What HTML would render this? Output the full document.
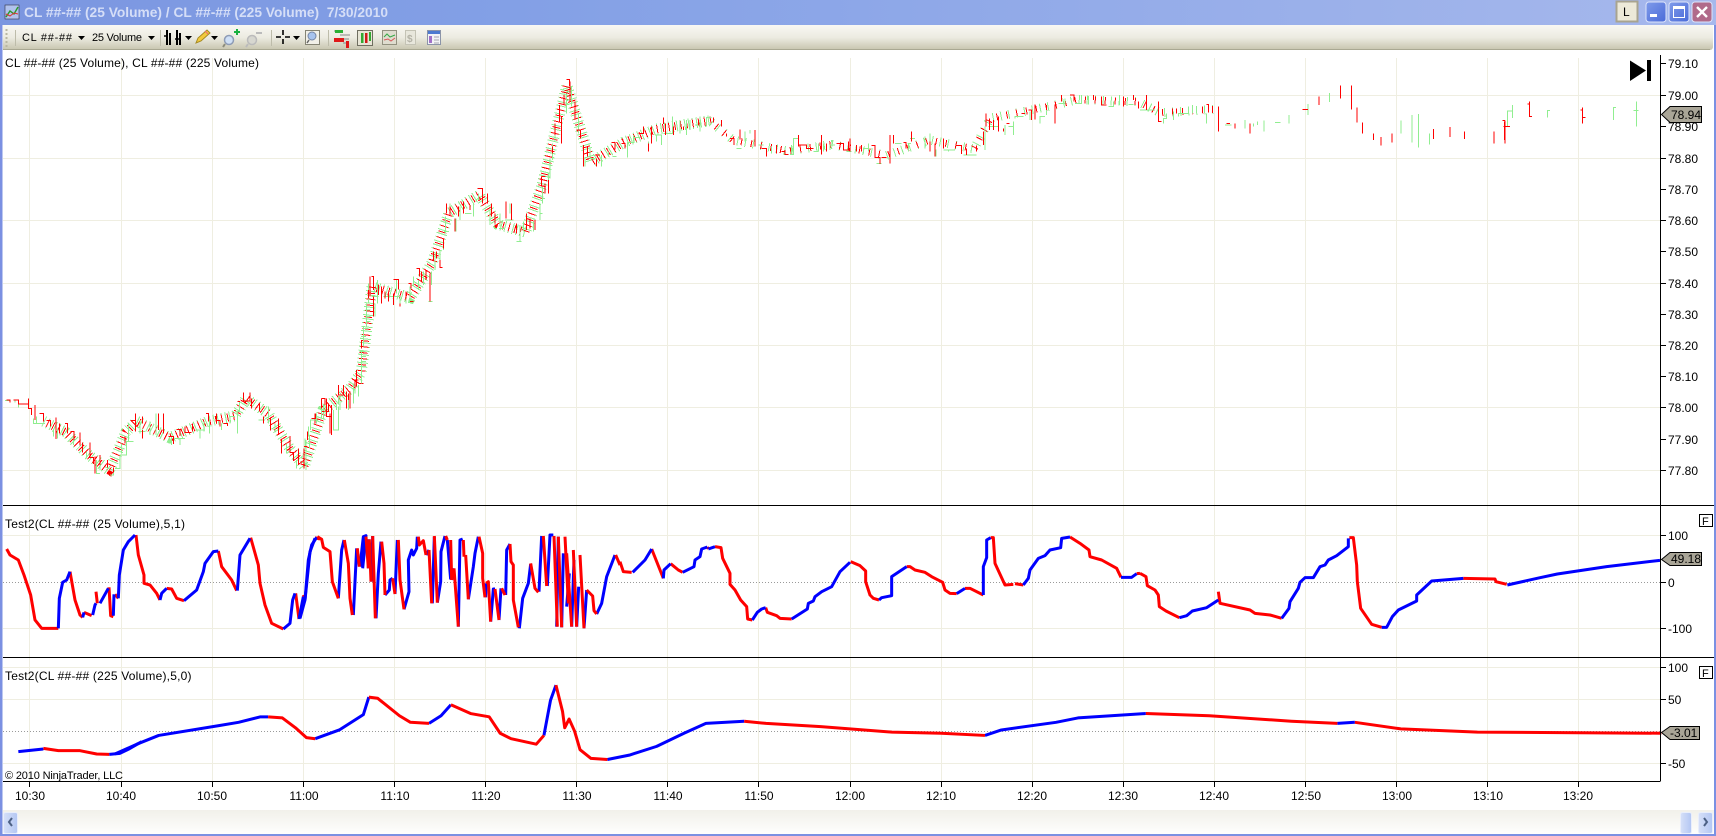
<!DOCTYPE html>
<html><head><meta charset="utf-8"><title>CL chart</title>
<style>
html,body{margin:0;padding:0;background:#fff;width:1716px;height:836px;overflow:hidden}
svg{display:block;font-family:"Liberation Sans",sans-serif}
.r,.b,.gb,.rb,.hg,.hr{fill:none;vector-effect:non-scaling-stroke}
.r{stroke:#f00;stroke-width:3px;stroke-linejoin:round}
.b{stroke:#00f;stroke-width:3px;stroke-linejoin:round}
.rb{stroke:#f00;stroke-width:1px;shape-rendering:crispEdges}
.gb{stroke:#90ee90;stroke-width:1px;shape-rendering:crispEdges}
.hg{stroke:#90ee90;shape-rendering:crispEdges}
.hr{stroke:#f00;shape-rendering:crispEdges}
.g{stroke:#efeee1;stroke-width:1;shape-rendering:crispEdges}
.k{stroke:#000;stroke-width:1;shape-rendering:crispEdges}
text{font-size:12px;fill:#000}
</style></head><body>
<svg width="1716" height="836" viewBox="0 0 1716 836" xmlns="http://www.w3.org/2000/svg">
<defs>
<linearGradient id="tb" x1="0" x2="1" y1="0" y2="0"><stop offset="0" stop-color="#7b96e0"/><stop offset=".3" stop-color="#83a0e6"/><stop offset="1" stop-color="#a6b8ec"/></linearGradient>
<linearGradient id="tool" x1="0" x2="0" y1="0" y2="1"><stop offset="0" stop-color="#f9f8f3"/><stop offset=".5" stop-color="#ecebe1"/><stop offset="1" stop-color="#c6c4ae"/></linearGradient>
<linearGradient id="sb" x1="0" x2="0" y1="0" y2="1"><stop offset="0" stop-color="#f1f0ea"/><stop offset="1" stop-color="#fefefd"/></linearGradient>
<linearGradient id="btn" x1="0" x2="1" y1="0" y2="1"><stop offset="0" stop-color="#7f9bea"/><stop offset="1" stop-color="#4a6ad8"/></linearGradient>
<linearGradient id="sc" x1="0" x2="1" y1="0" y2="0"><stop offset="0" stop-color="#d6e0f8"/><stop offset="1" stop-color="#b3c6f3"/></linearGradient>
</defs>
<rect width="1716" height="836" fill="#fff"/>
<!-- title bar -->
<rect width="1716" height="25" fill="url(#tb)"/>
<rect x="5" y="5" width="14" height="14" fill="#dfe8f8" fill-opacity=".55" stroke="#334" stroke-width=".6"/>
<path d="M6 17l4-6 4 3 4-7" fill="none" stroke="#2a9a2a" stroke-width="1.4"/><path d="M6 14l4 2 4-3 4 1" fill="none" stroke="#d33" stroke-width="1"/>
<text x="24" y="17" textLength="364" lengthAdjust="spacingAndGlyphs" xml:space="preserve" style="font-size:14px;font-weight:bold;fill:#d5def7">CL ##-## (25 Volume) / CL ##-## (225 Volume)  7/30/2010</text>
<rect x="1616.5" y="1.5" width="21" height="20" fill="#ece9d8" stroke="#a8a490" stroke-width="2"/>
<text x="1623" y="16" style="font-size:12px">L</text>
<rect x="1646" y="2" width="20" height="20" rx="3" fill="url(#btn)" stroke="#dde4fa"/>
<rect x="1650" y="14" width="7" height="3" fill="#fff"/>
<rect x="1669" y="2" width="20" height="20" rx="3" fill="url(#btn)" stroke="#dde4fa"/>
<rect x="1673.5" y="7.5" width="11" height="10" fill="none" stroke="#fff"/><rect x="1673" y="6" width="12" height="3" fill="#fff"/>
<rect x="1692" y="2" width="20" height="20" rx="3" fill="#b06a8a" stroke="#dde4fa"/>
<path d="M1697 7l10 10M1707 7l-10 10" stroke="#fff" stroke-width="2.4"/>
<!-- borders -->
<rect x="0" y="25" width="2.5" height="811" fill="#7b90e2"/>
<rect x="1714" y="25" width="2" height="811" fill="#7b90e2"/>
<rect x="0" y="834" width="1716" height="2" fill="#7b90e2"/>
<!-- toolbar -->
<path d="M3 25H1713V47a3 3 0 0 1-3 3H3z" fill="url(#tool)"/>
<path d="M3 49.5H1710" stroke="#a9a892" shape-rendering="crispEdges"/>
<path d="M6.5 29v18" stroke="#b9b7a2" stroke-dasharray="2 2" stroke-width="2"/>
<path d="M15.5 30v16M160.5 30v16M271.5 30v16M328.5 30v16" stroke="#bdbcaa" shape-rendering="crispEdges"/>
<text x="22" y="41" textLength="50" style="font-size:11px">CL ##-##</text>
<path d="M78 36h7l-3.500 4z" /><text x="92" y="41" textLength="50" style="font-size:11px">25 Volume</text>
<path d="M148 36h7l-3.500 4z"/>
<path d="M167 30v15M170 33v12M177 30v15M180 33v12" stroke="#000" stroke-width="2"/><path d="M164 36h4M175 39h5" stroke="#000" stroke-width="1.500"/>
<path d="M185 36h7l-3.500 4z"/>
<path d="M196 43l2-5 9-8 3 3-9 8z" fill="#f2c93c" stroke="#a58a22"/><path d="M205 31l3 3" stroke="#e67"/>
<path d="M211 36h7l-3.500 4z"/>
<circle cx="229" cy="40" r="4.500" fill="#cfe0f6" stroke="#8e9cb6" stroke-width="1.500"/><path d="M225 44l-2 3" stroke="#8c8c7c" stroke-width="2"/><path d="M234 32h6M237 29v6" stroke="#19b040" stroke-width="2"/>
<circle cx="252" cy="40" r="4.500" fill="#d7d7d0" stroke="#bbb" stroke-width="1.500"/><path d="M248 44l-2 3" stroke="#bbb" stroke-width="2"/><path d="M256 33h6" stroke="#bbb" stroke-width="2"/>
<path d="M276 37h5M285 37h5M283 30v5M283 39v5" stroke="#000" stroke-width="1.600"/>
<path d="M293 36h7l-3.500 4z"/>
<rect x="305.500" y="30.500" width="14" height="14" fill="#f1f0e8" stroke="#858474"/><circle cx="312" cy="36" r="4" fill="#a7c3ee" stroke="#7585a4"/><path d="M309 40l-2 3" stroke="#666" stroke-width="1.500"/>
<path d="M334 31h8M340 35h10M343 39h6M343 43h6" stroke="#888" /><rect x="335" y="30" width="8" height="3" fill="#2cb035"/><rect x="334" y="38" width="10" height="4" fill="#e01818"/><rect x="346" y="41" width="3" height="7" fill="#e01818"/>
<rect x="357.500" y="30.500" width="15" height="15" fill="#e7e5d6" stroke="#6f6e60"/><rect x="361" y="33" width="2.500" height="10" fill="#32a832"/><rect x="365" y="33" width="2.500" height="10" fill="#d01818"/><rect x="369" y="32" width="2" height="9" fill="#32a832"/>
<rect x="382.500" y="30.500" width="14" height="14" fill="#dfddcf" stroke="#92917f"/><path d="M384 37l3-3 3 3 5-2" fill="none" stroke="#35a845"/><path d="M384 40l4-1 3 2 4-3" fill="none" stroke="#d85858"/>
<rect x="405.500" y="30.500" width="10" height="14" fill="#e8e7dc" stroke="#c4c3b5"/><text x="407" y="42" style="font-size:10px;font-weight:bold;fill:#b3b2a6">$</text>
<rect x="427.500" y="30.500" width="13" height="14" fill="#f2f3f6" stroke="#8b94a8"/><rect x="428" y="31" width="12" height="3" fill="#4d7ad0"/><rect x="429" y="36" width="3" height="7" fill="#a070c8"/><path d="M434 37h5M434 40h5M434 43h5" stroke="#a5a5b0"/>
<!-- grid -->
<path class="g" d="M29.500 58V781M121.500 58V781M212.500 58V781M303.500 58V781M394.500 58V781M485.500 58V781M576.500 58V781M667.500 58V781M758.500 58V781M850.500 58V781M941.500 58V781M1032.500 58V781M1123.500 58V781M1214.500 58V781M1305.500 58V781M1396.500 58V781M1487.500 58V781M1578.500 58V781"/>
<path class="g" d="M3 95.500H1660M3 158.500H1660M3 220.500H1660M3 283.500H1660M3 345.500H1660M3 407.500H1660M3 470.500H1660M3 535.500H1660M3 628.500H1660M3 667.500H1660M3 699.500H1660M3 763.500H1660"/>
<path d="M3 582.500H1660M3 731.500H1660" stroke="#9a9a9a" stroke-dasharray="1 2" shape-rendering="crispEdges"/>
<!-- price hatch -->
<g transform="scale(1.0944)">
<path class="hg" style="stroke-width:11px;stroke-dasharray:1 3" d="M40 385L60 395 80 415 100 430 115 395 125 385 155 400 190 385 215 380 225 364 245 378 265 410 278 426 295 375 320 355 330 340 340 262 375 272 395 240 410 195 438 178 455 205 480 212 495 170 505 130 518 78 528 110 540 148 570 130 600 118 650 110"/>
<path class="hr" style="stroke-width:8px;stroke-dasharray:1 5;stroke-dashoffset:2" d="M40 385L60 395 80 415 100 430 115 395 125 385 155 400 190 385 215 380 225 364 245 378 265 410 278 426 295 375 320 355 330 340 340 262 375 272 395 240 410 195 438 178 455 205 480 212 495 170 505 130 518 78 528 110 540 148 570 130 600 118 650 110"/>
<path class="hg" style="stroke-width:9px;stroke-dasharray:1 7" d="M650 112L670 128 720 138 760 132 810 142 850 128 890 136 905 108 960 97 985 91 1040 93 1060 103 1110 100"/>
<path class="hr" style="stroke-width:7px;stroke-dasharray:1 9;stroke-dashoffset:4" d="M650 112L670 128 720 138 760 132 810 142 850 128 890 136 905 108 960 97 985 91 1040 93 1060 103 1110 100"/>
</g>
<!-- price bars -->
<g transform="translate(0 380) scale(.33333)">
<path class="gb" d="M15 62h15M45 58v10M55 72v10M100 115v15h35M110 110v20M160 150v20M172 145v30M220 170v25M260 215v20M290 240v40h10M300 225v45M330 285h10v-20M345 265h15v-40h20v-40M365 190v30M385 130v55h15M420 120v40M415 155h20M450 125v40M468 100v65M515 170v25M540 175v20M525 175h30M590 150h25M600 150v25M612 125v30M628 110v50M665 130v20M690 130v-20h15M712 95v65M718 65v30h-12M775 120h20M805 80v50M825 130v28M860 190v30M890 240v25M918 180v90M928 165v40M932 120v30M950 100v30M970 75v40M1000 90v60h15v-50M1020 50v40M1060 10v60"/>
<path class="rb" d="M20 60h10v8M40 60h15v12h30M85 55v30h10v20M105 75v45M118 100h12v25M140 122h12v18M168 112v65M178 130v30M195 130h8v30M212 155h10v25M240 157v40M248 187v30M270 187v45h10v20M285 230v50M300 225v30M322 240v22M340 262v15M375 170v20M392 122h15v-22M407 100v55M428 110v20M428 150v25M475 100v50M490 100v60M505 170h15v22M530 148h10v20M555 140v18h20M578 130v25M618 100h8v25M650 100v22h10v18M670 130h12v8M712 65h8M730 38v25h20v-25M755 55v30M778 70v25M790 110v20M812 112v40M835 115v50M845 180v40M870 168v50h10v25M895 205v50M912 205v60M925 150v20M945 100v30M965 55v40h20v-25M990 100v60M1015 15v30h20M1045 40v50M1065 0v40M1075 10h15"/>
</g>
<g transform="translate(300 170) scale(.33333)">
<path class="gb" d="M15 835v-30M25 800v-30M30 750h25M65 745v-30M75 700v30M100 780h15v-70M110 700v20M115 700v-20h10M145 690v30M165 670v-15M175 680v-35M185 640v-100M178 545h18M183 560h15M183 575h15M178 590h20M190 530v-60M183 500h15M190 475h15M200 470v-70M205 400v-60M196 440h15M196 420h15M200 455h12M225 400v40M232 330v70M215 380h20M250 380h50M290 330v40M300 380v30M318 370v30M325 390h15M330 350v40M340 350v-30M355 360v-30M370 345v-40M390 395v-50M385 395h12M395 345v-40M405 300v-50M420 270v-30M430 240v-30M437 190v-50M450 130v-30M432 185h15M468 185v-40M480 150v-40M495 130h20M520 140v-40M535 90v-20M570 165v-50M585 165v-35M597 175h15M600 130v40M615 150h25M630 130v-30M660 215v-50M650 215h15M670 185v-30M700 185v-30M720 150v-50M728 100v-50M745 70v-60M725 85h10M718 130h10"/>
<path class="rb" d="M12 830h10M22 785v25M35 745h12v-15M65 685h10v20M80 685v55h15M95 705v90M115 645v30h15v-30M140 665v50M150 665v50M170 600v50M160 630h15M175 602h8M185 510v25M210 320v60M215 320h5v40M205 360v25M220 380v60M235 345v30M245 350v50M255 365v20M265 365v30M280 328h15v30M280 370v35M300 400v10M318 365v20M325 340h8v15M340 395h-10M350 295h8v25M365 305v30M378 300v30M390 310v85M400 245v25h-8M410 245v20M420 270v22h8M430 205v30M440 100v30M450 110v25M465 145v40M475 110v30M490 95v35M510 105v15M532 55h15v30M548 70v30M563 70v30M575 100v40M585 130v30M618 95v50M635 100v50M650 160v30M680 130v50M690 145v30M705 150v30M725 20v30M735 40v30M745 30v40"/>
</g>
<g transform="translate(500 70) scale(.33333)">
<path class="gb" d="M150 325v-60M158 270v-50M165 215v-50M185 190v-40M200 130v-60M215 110v-60M235 190v-60M255 265v25M270 235v30h15M305 290v-35M325 260v-15M350 260h-12M382 262v-45h20v-15h20M400 195v20M445 240v-25M470 215v-20h15v30M490 190h30M517 140v50M540 150v40M560 195v-45M570 150v30M585 165h20M600 150v35M620 170v-28h15M710 235h15M735 215v-30M750 190v-10M775 225h15M815 250v-20M830 235v15M880 230v-25h15M875 250v-25"/>
<path class="rb" d="M200 28h8v20M210 35v60M192 75v30M178 105v50M165 160v35M185 140v80M158 230v20M125 320h12M225 95v50M230 180h12v25M250 225v65M262 230v30M290 265v25M300 255h-15M335 218h10v20M365 220h10v15M430 170v20h-15M455 170v50M445 220v25M490 142v20M497 160v35M520 170v25M550 170v10M595 150v15M640 142v15M665 150v20M680 190v10M690 205h12v20M720 178v30M765 180v50M785 235h15v25M830 225v25M855 240v15M895 205v25"/>
</g>
<g transform="translate(780 75) scale(.33333)">
<path class="gb" d="M30 238h10v-30M40 190h15M115 230h-15M115 230v-25M130 205v25M150 225v-15h15M200 230h15M250 235v-15h15M265 205v25M305 265h-15M330 220v40M345 205h20M385 230v-25h8M405 190h-15M435 185v35M450 175v30M468 245v-20h-5M490 225h35M505 225v5M550 240h40M615 225v-70M625 155h30M675 180v-30M685 155h15M700 180v-40M705 130v-5h25M750 135v-25M780 145v-20h15M800 120v-30M835 85h20v-15M885 85h20v-25M925 88v-25M985 95h15v-15M1018 90v-30M1045 88h15M1080 105h45M1150 145v-15h10v-15M1180 135v-25M1195 125v-10h30M1238 115v-25M1280 145v-30M1315 170v-20M1335 150h20M1395 135v25M1420 155v-10M1432 150v-10"/>
<path class="rb" d="M5 230h10v8h10M55 180v30h25v10h20M125 180v58M140 205v25M170 205h20v20h15v-25M210 190v40M230 210v20M245 210v20M275 212h10v35h15v20M305 248h15M330 180v85M340 180v25M395 170v30M370 202h8v18M450 200v30M465 205v40M490 190v30M530 212h15v25M560 220v20M590 212v18M610 170v40M618 115v40M628 130v35M640 135v30M655 125v45M670 160v10M680 145h8M725 115h10M745 105h10v30M765 88v45M800 90v15M825 88v58M845 60v20M870 60h12v20M940 60v15M965 65v25h15M1030 65v30M1060 60v15M1075 80v20M1100 60v45M1135 80v60h10M1190 100v15M1280 88h5v25M1315 95v75M1340 145h10M1365 145v15M1410 145v30"/>
</g>
<g transform="scale(1.0944)">
<path class="gb" d="M1155 120v-10M1165 112h5M1178 105v8M1195 95v10M1215 85v8M1280 110v12M1290 105v25M1296 104v31M1306 122v10M1382 97v11"/>
<path class="rb" d="M1190 100h5M1205 88v8M1225 78v12M1235 78v22M1240 98v14M1245 112v10M1255 122v6M1262 125v8M1272 122v8M1310 118v9M1325 116v9M1338 120v7M1365 120v11M1375 110v21"/>
</g>
<g transform="translate(1500 0) scale(.33333)">
<path class="gb" d="M22 378v-45h15M38 315v25M142 352v-20h8M340 360v-38h8M410 305v75M400 332h15"/>
<path class="rb" d="M14 420v-55M8 362h7M10 380h20M88 305v45h8M82 312h6M248 322v48M248 352h8M242 330h6"/>
</g>
<!-- indicator 1 -->
<g transform="translate(0 525) scale(.33333)">
<path class="r" d="M20 72L30 90 55 105 72 150 92 210 105 285 125 310H175M210 140L225 225 240 270 248 277M252 262L275 272M288 200L292 235M327 187L332 272 340 275M345 208L355 220M408 30L415 90 432 150V175L450 180 470 205 480 225M500 190L515 192 530 220 552 227M655 78L665 125 695 165 710 197M752 38L775 120 780 175 795 240 815 295 850 312M887 205L897 282M910 210L915 225M945 38L960 42"/>
<path class="b" d="M175 310L178 220 188 172 200 165 210 140M248 277L252 262M278 270L285 240 288 235M300 235L325 190M340 272L342 208M355 220L358 150 370 75 385 50 405 30M480 225L485 205 500 190M552 227L590 195 610 140 615 115 640 80 655 78M712 197L720 90 750 40M850 312L870 295 878 225 885 205M897 282L910 215M915 225L930 80 945 40"/>
</g>
<g transform="translate(300 520) scale(.33333)">
<path class="b" d="M0 295L15 240 25 120 35 75 50 52M115 235L125 90 132 60M160 285L170 85M180 140L190 50 198 47 188 145M205 145L207 58M215 185L218 48M228 295L235 160 243 65M255 225L268 210 270 180 278 175M285 222L292 60M312 268L327 215 325 120 335 90 340 105 350 85 352 50M378 105L387 90M397 250L403 50M412 248L422 185 423 95 435 48M442 60L452 178M455 180L462 145M475 320L480 60 488 57M505 238L520 140 525 100 535 50M557 232L558 190M572 305L580 207H585M597 300L603 205M617 225L620 90 630 72M658 325L668 235 685 190 692 132M717 215L725 48M742 198L750 45H760M770 320L775 50M785 322L790 100M800 260L808 160M815 320L822 120M830 320L836 200M852 325L860 210M890 282L905 250 920 170 945 105"/>
<path class="r" d="M52 50L65 58 70 82 90 95 97 185 115 235M133 60L145 130 150 235 157 285M172 85L178 140M198 50L205 145M208 58L213 185M218 48L226 295M245 65L252 130 255 225M278 175L285 222M295 60L300 180 312 268M355 50L358 75 370 62 378 105M387 90L395 250M403 48L412 248M437 48L442 60M452 60L455 180M462 145L475 320M490 60L492 110M497 105L505 238M537 50L548 100V175L555 232M558 190L565 185 572 305M585 207L597 300M605 205L615 225M630 72L633 125 640 135V240L655 322M692 130L705 205 715 217M730 48L740 198M762 48L772 320M775 50L785 322M795 50L805 250M800 100L815 320M820 90L830 320M840 105L852 325M860 210L878 228 882 272 890 282M947 105L960 135"/>
</g>
<g transform="translate(620 525) scale(.33333)">
<path class="r" d="M0 110L10 140 35 142M95 72L130 160M152 116L175 135 188 142M262 66L265 72M285 65L303 68 308 100 330 145V178L345 195 362 225 380 245 383 282 397 285M437 248L442 262 470 272 480 280 515 282M692 110L720 122 737 138V170L750 210 760 220 777 225M860 125L870 125 885 135 915 142 935 155 968 172 975 195 990 205 1010 206M1035 190H1050L1090 210M1112 38H1120L1125 115 1155 180 1180 178M1185 176L1210 180M1350 36L1380 55 1407 75 1410 95 1445 105 1490 130 1503 157M1550 146L1560 145"/>
<path class="b" d="M38 142L75 105 95 72M130 160L132 135 152 116M188 142L222 125 225 105 240 95 245 72 262 66M265 72L285 65M397 285L412 262 425 252 437 248M515 282L562 252 565 235 580 228 585 215 605 200 635 185 660 140 690 112M777 225L785 218 815 212V155L860 125M1010 206L1035 190M1090 210V125L1100 98V45L1112 38M1210 180L1225 160 1230 135 1255 100 1275 92 1290 75 1322 68 1325 40 1350 36M1503 157H1535L1550 146"/>
</g>
<g transform="translate(1140 525) scale(.33333)">
<path class="r" d="M0 145L18 155 22 182 45 195 55 210 58 245 78 258 118 278M235 200L240 235 330 255 345 265 390 270 425 280M628 38H640L650 120 652 170 662 250 695 298 725 307M970 160L1065 162 1068 170 1100 178"/>
<path class="b" d="M118 278L140 272 157 258 200 248 235 225M425 280L447 250 450 230 475 190 480 172 495 158H520L540 125 555 120 565 105 590 92 625 65V40M725 307H740L757 275 775 255 830 228V210L875 168 970 160M1102 180L1200 158 1252 147 1400 125 1560 106"/>
</g>
<!-- indicator 2 -->
<g transform="translate(0 720) scale(.33333)">
<path class="r" d="M130 85L175 92H240L290 102 328 103"/>
<path class="b" d="M55 95L130 87M328 103L360 100 385 88 425 65"/>
</g>
<g transform="scale(1.0944)">
<path class="b" d="M105 689L125 680 145 672 200 663 218 660 238 655 245 655M288 675L310 667 332 653 337 637M392 661L403 654 412 644M497 672L503 640 508 626M555 694L575 690 600 682 625 670 645 661 680 659M900 672L915 667 965 660 985 656 1047 652M1222 661L1238 660"/>
<path class="r" d="M245 655L258 656 270 665 280 674 288 675M337 637L345 638 365 654 375 660 392 661M412 644L430 652 447 655 457 670 467 675 490 680 497 672M508 626L514 650 516 665 520 657 525 668 530 685 540 693 555 694M680 659L700 661 750 664 815 669 860 670 900 672M1047 652L1105 654 1180 659 1222 661M1238 660L1280 666 1350 669 1518 670"/>
</g>
<!-- frame lines -->
<path class="k" d="M3 505.500H1714M3 657.500H1714M3 781.500H1660.500M1660.500 55V781"/>
<path class="k" d="M1660 63.500h6M1660 95.500h6M1660 126.500h6M1660 158.500h6M1660 189.500h6M1660 220.500h6M1660 251.500h6M1660 283.500h6M1660 314.500h6M1660 345.500h6M1660 376.500h6M1660 407.500h6M1660 439.500h6M1660 470.500h6M1660 535.500h6M1660 582.500h6M1660 628.500h6M1660 667.500h6M1660 699.500h6M1660 763.500h6"/>
<path class="k" d="M29.500 781v6M121.500 781v6M212.500 781v6M303.500 781v6M394.500 781v6M485.500 781v6M576.500 781v6M667.500 781v6M758.500 781v6M850.500 781v6M941.500 781v6M1032.500 781v6M1123.500 781v6M1214.500 781v6M1305.500 781v6M1396.500 781v6M1487.500 781v6M1578.500 781v6"/>
<!-- axis labels -->
<text x="1668" y="68">79.10</text><text x="1668" y="100">79.00</text><text x="1668" y="131">78.90</text><text x="1668" y="163">78.80</text><text x="1668" y="194">78.70</text><text x="1668" y="225">78.60</text><text x="1668" y="256">78.50</text><text x="1668" y="288">78.40</text><text x="1668" y="319">78.30</text><text x="1668" y="350">78.20</text><text x="1668" y="381">78.10</text><text x="1668" y="412">78.00</text><text x="1668" y="444">77.90</text><text x="1668" y="475">77.80</text>
<text x="1668" y="540">100</text><text x="1668" y="587">0</text><text x="1668" y="633">-100</text>
<text x="1668" y="672">100</text><text x="1668" y="704">50</text><text x="1668" y="768">-50</text>
<g text-anchor="middle"><text x="30" y="800">10:30</text><text x="121" y="800">10:40</text><text x="212" y="800">10:50</text><text x="304" y="800">11:00</text><text x="395" y="800">11:10</text><text x="486" y="800">11:20</text><text x="577" y="800">11:30</text><text x="668" y="800">11:40</text><text x="759" y="800">11:50</text><text x="850" y="800">12:00</text><text x="941" y="800">12:10</text><text x="1032" y="800">12:20</text><text x="1123" y="800">12:30</text><text x="1214" y="800">12:40</text><text x="1306" y="800">12:50</text><text x="1397" y="800">13:00</text><text x="1488" y="800">13:10</text><text x="1578" y="800">13:20</text></g>
<text x="5" y="67" textLength="254">CL ##-## (25 Volume), CL ##-## (225 Volume)</text>
<text x="5" y="528" textLength="180">Test2(CL ##-## (25 Volume),5,1)</text>
<text x="5" y="680" textLength="186.500">Test2(CL ##-## (225 Volume),5,0)</text>
<text x="5" y="779" textLength="118" style="font-size:11px">© 2010 NinjaTrader, LLC</text>
<!-- tags -->
<path d="M1661.500 114.500L1670 106.500H1701.500V122.500H1670z" fill="#a9a597" stroke="#000"/><text x="1671" y="119">78.94</text>
<path d="M1661.500 559.500L1670 552.500H1701.500V565.500H1670z" fill="#a9a597" stroke="#000"/><text x="1671" y="563">49.18</text>
<path d="M1661.500 732.500L1670 726.500H1699.500V739.500H1670z" fill="#a9a597" stroke="#000"/><text x="1670" y="737">-3.01</text>
<rect x="1699.500" y="514.500" width="13" height="12" fill="#fff" stroke="#000" shape-rendering="crispEdges"/><text x="1702" y="525" style="font-size:11px">F</text>
<rect x="1699.500" y="666.500" width="13" height="12" fill="#fff" stroke="#000" shape-rendering="crispEdges"/><text x="1702" y="677" style="font-size:11px">F</text>
<!-- end icon -->
<path d="M1630 60.500L1646 70.500 1630 81z"/><rect x="1647" y="60" width="4" height="21"/>
<!-- scrollbar -->
<rect x="3" y="810" width="1711" height="24" fill="url(#sb)"/>
<rect x="3.500" y="812.500" width="14" height="21" rx="2" fill="url(#sc)" stroke="#e9eefb"/>
<path d="M12 818l-3 4 3 4" fill="none" stroke="#4d6185" stroke-width="2"/>
<rect x="1680.500" y="812.500" width="11" height="21" rx="2" fill="url(#sc)" stroke="#e9eefb"/>
<rect x="1698.500" y="812.500" width="14" height="21" rx="2" fill="url(#sc)" stroke="#e9eefb"/>
<path d="M1704 818l3 4-3 4" fill="none" stroke="#4d6185" stroke-width="2"/>
</svg>
</body></html>
